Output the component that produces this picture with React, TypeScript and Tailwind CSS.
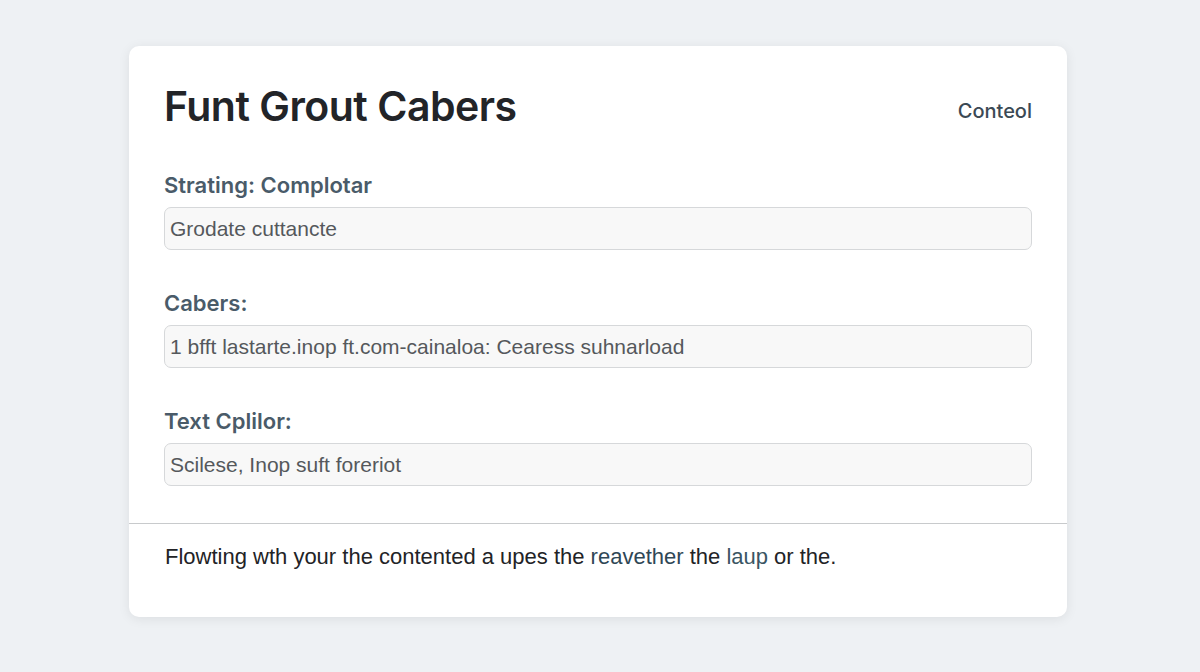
export default function App() {
    const fields = [
        { label: "Strating: Complotar", value: "Grodate cuttancte" },
        { label: "Cabers:", value: "1 bfft lastarte.inop ft.com-cainaloa: Cearess suhnarload" },
        { label: "Text Cplilor:", value: "Scilese, Inop suft foreriot" },
    ]

    return (
        <div className="min-h-screen w-full bg-[#eef1f4] pt-[46px] font-['Inter',sans-serif]">
            <div className="ml-[129px] w-[938px] h-[571px] rounded-[10px] bg-white shadow-[0_2px_12px_rgba(0,0,0,0.08)] flex flex-col">
                <div className="px-[35px] pt-[36px]">
                    <div className="flex items-center justify-between">
                        <h1 className="text-[41px] leading-[48px] font-semibold tracking-[-0.5px] text-[#222428]">
                            Funt Grout Cabers
                        </h1>
                        <span className="mt-[10px] text-[20px] font-medium text-[#3b4954]">Conteol</span>
                    </div>

                    <div className="mt-[42px] flex flex-col gap-[40px]">
                        {fields.map((f) => (
                            <div key={f.label}>
                                <div className="text-[22px] leading-[27px] font-semibold text-[#4a5b69]">{f.label}</div>
                                <div className="mt-[8px] h-[43px] rounded-[7px] border border-[#d6d8da] bg-[#f8f8f8] px-[5px] flex items-center text-[21px] text-[#55585c] font-['Liberation_Sans',sans-serif]">
                                    {f.value}
                                </div>
                            </div>
                        ))}
                    </div>
                </div>

                <div className="mt-[37px] border-t border-[#c8cacc]" />

                <div className="px-[36px] pt-[16px] text-[22px] text-[#222326] font-['Liberation_Sans',sans-serif]">
                    Flowting wth your the contented a upes the{" "}
                    <span className="text-[#2f4756]">reavether</span> the <span className="text-[#3a5563]">laup</span> or the.
                </div>
            </div>
        </div>
    )
}
